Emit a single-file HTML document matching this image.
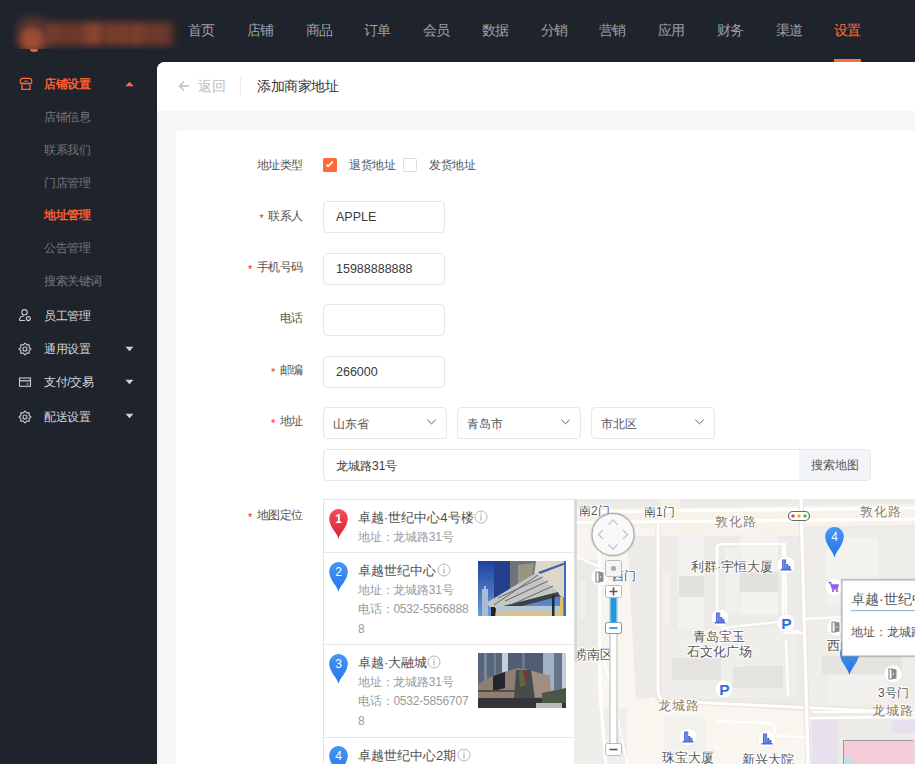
<!DOCTYPE html>
<html><head><meta charset="utf-8">
<style>
*{margin:0;padding:0;box-sizing:border-box}
html,body{width:915px;height:764px;overflow:hidden;background:#1f232c;font-family:"Liberation Sans",sans-serif}
.abs{position:absolute}
#hdr{position:absolute;left:0;top:0;width:915px;height:62px;background:#1f232c}
.nav{position:absolute;top:21px;font-size:14px;line-height:18px;color:#9ea1a8;white-space:nowrap;letter-spacing:-1px}
.nav.on{color:#ff6a3a;font-weight:500}
#navbar{position:absolute;left:834px;top:59px;width:27px;height:3px;background:#ff6c3b}
#side{position:absolute;left:0;top:62px;width:157px;height:702px;background:#1f232c}
.si{position:absolute;left:44px;font-size:12px;line-height:16px;color:#d4d6da;white-space:nowrap;font-weight:500;letter-spacing:-0.4px}
.si.sub{color:#73767d;font-weight:400}
.si.on{color:#fa5f32;font-weight:600}
#main{position:absolute;left:157px;top:62px;width:758px;height:702px;background:#f6f6f6;border-top-left-radius:8px;overflow:hidden}
#topbar{position:absolute;left:0;top:0;width:758px;height:49px;background:#fff}
#card{position:absolute;left:19px;top:68px;width:760px;height:700px;background:#fff;border-radius:4px}
.lbl{position:absolute;font-size:12px;letter-spacing:-0.45px;line-height:16px;color:#555;white-space:nowrap;text-align:right}
.req{color:#f5222d;font-size:11px;margin-right:5px;position:relative;top:2px}
.inp{position:absolute;border:1px solid #e8e8e8;border-radius:4px;background:#fff;font-size:12.5px;color:#3a3a3a;line-height:16px}
.t13{position:absolute;font-size:13px;line-height:18px;color:#505050;white-space:nowrap}
.t12{position:absolute;font-size:12px;line-height:16px;color:#9a9a9a;white-space:nowrap;letter-spacing:-0.2px}
</style></head><body>
<div id="hdr">
  <div class="abs" style="left:0;top:8px;width:190px;height:41px;overflow:hidden">
<div class="abs" style="left:14px;top:0;width:176px;height:50px;filter:blur(3.5px)">
<div class="abs" style="left:32px;top:14px;width:128px;height:24px;background:#56302a"></div>
<div class="abs" style="left:36px;top:14px;width:3px;height:23px;background:#8d4631"></div><div class="abs" style="left:42px;top:14px;width:2px;height:23px;background:#a14c30"></div><div class="abs" style="left:48px;top:14px;width:2px;height:23px;background:#96482f"></div><div class="abs" style="left:54px;top:14px;width:2px;height:23px;background:#8d4631"></div><div class="abs" style="left:58px;top:14px;width:2px;height:23px;background:#7a3f2e"></div><div class="abs" style="left:63px;top:14px;width:2px;height:23px;background:#8d4631"></div><div class="abs" style="left:67px;top:14px;width:5px;height:23px;background:#7a3f2e"></div><div class="abs" style="left:74px;top:14px;width:5px;height:23px;background:#a14c30"></div><div class="abs" style="left:81px;top:14px;width:5px;height:23px;background:#a14c30"></div><div class="abs" style="left:90px;top:14px;width:5px;height:23px;background:#7a3f2e"></div><div class="abs" style="left:97px;top:14px;width:3px;height:23px;background:#a14c30"></div><div class="abs" style="left:104px;top:14px;width:3px;height:23px;background:#96482f"></div><div class="abs" style="left:110px;top:14px;width:3px;height:23px;background:#a14c30"></div><div class="abs" style="left:117px;top:14px;width:3px;height:23px;background:#8d4631"></div><div class="abs" style="left:122px;top:14px;width:5px;height:23px;background:#8d4631"></div><div class="abs" style="left:130px;top:14px;width:2px;height:23px;background:#a14c30"></div><div class="abs" style="left:136px;top:14px;width:2px;height:23px;background:#8d4631"></div><div class="abs" style="left:141px;top:14px;width:5px;height:23px;background:#7a3f2e"></div><div class="abs" style="left:149px;top:14px;width:4px;height:23px;background:#7a3f2e"></div>
<div class="abs" style="left:6px;top:19px;width:24px;height:24px;border-radius:50%;background:#c95d3a"></div>
<div class="abs" style="left:2px;top:8px;width:34px;height:38px;border-radius:40%;background:#7a3f2f;opacity:.55"></div>
</div></div>
<div class="abs" style="left:30px;top:49px;width:8px;height:3px;border-radius:0 0 4px 4px;background:#e0622f"></div>
  <div class="nav" style="left:188px">首页</div>
  <div class="nav" style="left:247px">店铺</div>
  <div class="nav" style="left:306px">商品</div>
  <div class="nav" style="left:364px">订单</div>
  <div class="nav" style="left:423px">会员</div>
  <div class="nav" style="left:482px">数据</div>
  <div class="nav" style="left:541px">分销</div>
  <div class="nav" style="left:599px">营销</div>
  <div class="nav" style="left:658px">应用</div>
  <div class="nav" style="left:717px">财务</div>
  <div class="nav" style="left:776px">渠道</div>
  <div class="nav on" style="left:834px">设置</div>
  <div id="navbar"></div>
</div>
<div id="side">
  <div class="si on" style="top:14px">店铺设置</div>
  <div class="si sub" style="top:47px">店铺信息</div>
  <div class="si sub" style="top:80px">联系我们</div>
  <div class="si sub" style="top:113px">门店管理</div>
  <div class="si on" style="top:145px">地址管理</div>
  <div class="si sub" style="top:178px">公告管理</div>
  <div class="si sub" style="top:211px">搜索关键词</div>
  <div class="si" style="top:246px">员工管理</div>
  <div class="si" style="top:279px">通用设置</div>
  <div class="si" style="top:312px">支付/交易</div>
  <div class="si" style="top:347px">配送设置</div>
</div>

<svg class="abs" style="left:19px;top:77px" width="14" height="14" viewBox="0 0 14 14"><path d="M2 6.3C1.2 5.8 1.1 4.8 1.3 3.6C1.6 2 2.3 1.3 3.6 1.3H10.4C11.7 1.3 12.4 2 12.7 3.6C12.9 4.8 12.8 5.8 12 6.3C11.2 6.9 10.2 6.6 9.5 6C8.9 6.7 8 7 7 6.3C6 7 5.1 6.7 4.5 6C3.8 6.6 2.8 6.9 2 6.3Z" fill="none" stroke="#ff6a3a" stroke-width="1.3" stroke-linejoin="round"/><path d="M5.3 4.2H8.7" stroke="#ff6a3a" stroke-width="1.1"/><path d="M3 7.3V12.4H11V7.3" fill="none" stroke="#ff6a3a" stroke-width="1.3"/></svg>
<svg class="abs" style="left:125px;top:81px" width="9" height="6" viewBox="0 0 9 6"><path d="M0.3 5.3L4.5 0.8L8.7 5.3Z" fill="#ff6a3a"/></svg>
<svg class="abs" style="left:18px;top:308px" width="14" height="14" viewBox="0 0 14 14"><circle cx="6.5" cy="4.3" r="2.7" fill="none" stroke="#c9cbd0" stroke-width="1.1"/><path d="M1.5 12.5C1.5 9.5 3.5 8 6 8" fill="none" stroke="#c9cbd0" stroke-width="1.1"/><path d="M1.5 12.5H7" stroke="#c9cbd0" stroke-width="1.1"/><circle cx="10.3" cy="10.6" r="2" fill="none" stroke="#c9cbd0" stroke-width="1.1"/></svg>
<svg class="abs" style="left:18px;top:342px" width="14" height="14" viewBox="0 0 14 14"><path d="M7 1L8.7 2.9L11.2 2.8L11.1 5.3L13 7L11.1 8.7L11.2 11.2L8.7 11.1L7 13L5.3 11.1L2.8 11.2L2.9 8.7L1 7L2.9 5.3L2.8 2.8L5.3 2.9Z" fill="none" stroke="#c9cbd0" stroke-width="1.1" stroke-linejoin="round"/><circle cx="7" cy="7" r="2" fill="none" stroke="#c9cbd0" stroke-width="1.1"/></svg>
<svg class="abs" style="left:18px;top:375px" width="14" height="14" viewBox="0 0 14 14"><rect x="1.5" y="3" width="11" height="8.3" fill="none" stroke="#c9cbd0" stroke-width="1.1"/><path d="M1.5 5.8H12.5" stroke="#c9cbd0" stroke-width="1.3"/><path d="M8.5 9H10.5" stroke="#c9cbd0" stroke-width="1.1"/></svg>
<svg class="abs" style="left:18px;top:410px" width="14" height="14" viewBox="0 0 14 14"><path d="M7 1L8.7 2.9L11.2 2.8L11.1 5.3L13 7L11.1 8.7L11.2 11.2L8.7 11.1L7 13L5.3 11.1L2.8 11.2L2.9 8.7L1 7L2.9 5.3L2.8 2.8L5.3 2.9Z" fill="none" stroke="#c9cbd0" stroke-width="1.1" stroke-linejoin="round"/><circle cx="7" cy="7" r="2" fill="none" stroke="#c9cbd0" stroke-width="1.1"/></svg>
<svg class="abs" style="left:125px;top:346px" width="9" height="6" viewBox="0 0 9 6"><path d="M0.5 0.8L4.5 5.2L8.5 0.8Z" fill="#d0d0d0"/></svg>
<svg class="abs" style="left:125px;top:379px" width="9" height="6" viewBox="0 0 9 6"><path d="M0.5 0.8L4.5 5.2L8.5 0.8Z" fill="#d0d0d0"/></svg>
<svg class="abs" style="left:125px;top:413px" width="9" height="6" viewBox="0 0 9 6"><path d="M0.5 0.8L4.5 5.2L8.5 0.8Z" fill="#d0d0d0"/></svg>
<div id="main">
  <div id="topbar"></div>
  <div id="card"></div>
</div>

<div id="form">
  <!-- topbar content -->
  <svg class="abs" style="left:178px;top:80px" width="12" height="12" viewBox="0 0 12 12"><path d="M11 6H1.5M6 1.5L1.5 6L6 10.5" fill="none" stroke="#bfbfbf" stroke-width="1.3"/></svg>
  <div class="abs" style="left:198px;top:77px;font-size:14px;line-height:18px;color:#bdbdbd">返回</div>
  <div class="abs" style="left:240px;top:77px;width:1px;height:19px;background:#ebebeb"></div>
  <div class="abs" style="left:257px;top:77px;font-size:14px;line-height:18px;color:#333;letter-spacing:-0.5px">添加商家地址</div>

  <div class="lbl" style="left:203px;width:100px;top:157px">地址类型</div>
  <div class="abs" style="left:323px;top:158px;width:14px;height:14px;background:#ff6a3a;border-radius:1.5px"></div>
  <svg class="abs" style="left:323px;top:158px" width="14" height="14" viewBox="0 0 14 14"><path d="M3.4 6.7L5.1 8.4L9.7 3.6" fill="none" stroke="#fff" stroke-width="1.7"/></svg>
  <div class="abs" style="left:349px;top:157px;font-size:12px;line-height:16px;color:#555;letter-spacing:-0.4px">退货地址</div>
  <div class="abs" style="left:403px;top:158px;width:14px;height:14px;border:1px solid #dcdcdc;border-radius:2px;background:#fff"></div>
  <div class="abs" style="left:429px;top:157px;font-size:12px;line-height:16px;color:#555;letter-spacing:-0.4px">发货地址</div>

  <div class="lbl" style="left:203px;width:100px;top:208px"><span class="req">*</span>联系人</div>
  <div class="inp" style="left:323px;top:201px;width:122px;height:32px;padding:6.5px 12px">APPLE</div>
  <div class="lbl" style="left:203px;width:100px;top:259px"><span class="req">*</span>手机号码</div>
  <div class="inp" style="left:323px;top:253px;width:122px;height:32px;padding:6.5px 12px">15988888888</div>
  <div class="lbl" style="left:203px;width:100px;top:310px">电话</div>
  <div class="inp" style="left:323px;top:304px;width:122px;height:32px"></div>
  <div class="lbl" style="left:203px;width:100px;top:362px"><span class="req">*</span>邮编</div>
  <div class="inp" style="left:323px;top:356px;width:122px;height:32px;padding:6.5px 12px">266000</div>
  <div class="lbl" style="left:203px;width:100px;top:413px"><span class="req">*</span>地址</div>
  <div class="inp" style="left:323px;top:407px;width:124px;height:32px;padding:7.5px 9px;color:#555;font-size:12px">山东省</div>
  <div class="inp" style="left:457px;top:407px;width:124px;height:32px;padding:7.5px 9px;color:#555;font-size:12px">青岛市</div>
  <div class="inp" style="left:591px;top:407px;width:124px;height:32px;padding:7.5px 9px;color:#555;font-size:12px">市北区</div>
  <svg class="abs" style="left:426px;top:418px" width="11" height="8" viewBox="0 0 11 8"><path d="M1.3 1.7L5.5 5.8L9.7 1.7" fill="none" stroke="#5a5a5a" stroke-width="1"/></svg>
  <svg class="abs" style="left:560px;top:418px" width="11" height="8" viewBox="0 0 11 8"><path d="M1.3 1.7L5.5 5.8L9.7 1.7" fill="none" stroke="#5a5a5a" stroke-width="1"/></svg>
  <svg class="abs" style="left:694px;top:418px" width="11" height="8" viewBox="0 0 11 8"><path d="M1.3 1.7L5.5 5.8L9.7 1.7" fill="none" stroke="#5a5a5a" stroke-width="1"/></svg>
  <div class="inp" style="left:323px;top:449px;width:548px;height:32px;padding:7.5px 12px;font-size:12px">龙城路31号</div>
  <div class="abs" style="left:799px;top:450px;width:71px;height:30px;background:#f3f4f7;font-size:12px;line-height:30px;text-align:center;color:#555;border-radius:0 3px 3px 0">搜索地图</div>

  <div class="lbl" style="left:203px;width:100px;top:507px"><span class="req">*</span>地图定位</div>
</div>

<div id="list" class="abs" style="left:323px;top:499px;width:251px;height:265px;background:#fff;border-left:1px solid #e4e4e4;border-top:1px solid #e4e4e4;overflow:hidden">
</div>
<div class="abs" style="left:574px;top:499px;width:4px;height:265px;background:#ececec"></div>
<div class="abs" style="left:574px;top:499px;width:4px;height:163px;background:#dadada"></div>
<div class="abs" style="left:324px;top:552px;width:250px;height:1px;background:#e8e8e8"></div>
<div class="abs" style="left:324px;top:644px;width:250px;height:1px;background:#e8e8e8"></div>
<div class="abs" style="left:324px;top:737px;width:250px;height:1px;background:#e8e8e8"></div>
<svg class="abs" style="left:329px;top:509px" width="19" height="30" viewBox="0 0 19 30"><defs><linearGradient id="g1r" x1="0" y1="0" x2="0" y2="1"><stop offset="0" stop-color="#f24f5e"/><stop offset="1" stop-color="#dc1d36"/></linearGradient></defs><path d="M9.5 30C8.6 24 1.2 19.5 0.28 10.5A9.3 9.3 0 1 1 18.72 10.5C17.8 19.5 10.4 24 9.5 30Z" fill="url(#g1r)"/><text x="9.5" y="14" font-size="12" font-weight="bold" text-anchor="middle" fill="#fff" font-family="Liberation Sans">1</text></svg>
<svg class="abs" style="left:329px;top:562px" width="19" height="30" viewBox="0 0 19 30"><defs><linearGradient id="g2b" x1="0" y1="0" x2="0" y2="1"><stop offset="0" stop-color="#4596f7"/><stop offset="1" stop-color="#2476e6"/></linearGradient></defs><path d="M9.5 30C8.6 24 1.2 19.5 0.28 10.5A9.3 9.3 0 1 1 18.72 10.5C17.8 19.5 10.4 24 9.5 30Z" fill="url(#g2b)"/><text x="9.5" y="14.3" font-size="12" text-anchor="middle" fill="#fff" font-family="Liberation Sans">2</text></svg>
<svg class="abs" style="left:329px;top:654px" width="19" height="30" viewBox="0 0 19 30"><defs><linearGradient id="g3b" x1="0" y1="0" x2="0" y2="1"><stop offset="0" stop-color="#4596f7"/><stop offset="1" stop-color="#2476e6"/></linearGradient></defs><path d="M9.5 30C8.6 24 1.2 19.5 0.28 10.5A9.3 9.3 0 1 1 18.72 10.5C17.8 19.5 10.4 24 9.5 30Z" fill="url(#g3b)"/><text x="9.5" y="14.3" font-size="12" text-anchor="middle" fill="#fff" font-family="Liberation Sans">3</text></svg>
<svg class="abs" style="left:329px;top:746px" width="19" height="30" viewBox="0 0 19 30"><defs><linearGradient id="g4b" x1="0" y1="0" x2="0" y2="1"><stop offset="0" stop-color="#4596f7"/><stop offset="1" stop-color="#2476e6"/></linearGradient></defs><path d="M9.5 30C8.6 24 1.2 19.5 0.28 10.5A9.3 9.3 0 1 1 18.72 10.5C17.8 19.5 10.4 24 9.5 30Z" fill="url(#g4b)"/><text x="9.5" y="14.3" font-size="12" text-anchor="middle" fill="#fff" font-family="Liberation Sans">4</text></svg>
<div class="t13" style="left:358px;top:509px">卓越·世纪中心4号楼</div><svg class="abs" style="left:474px;top:510px" width="14" height="14" viewBox="0 0 14 14"><circle cx="7" cy="7" r="6" fill="none" stroke="#b5b5b5" stroke-width="1"/><rect x="6.4" y="3.2" width="1.2" height="1.3" fill="#b5b5b5"/><rect x="6.4" y="5.5" width="1.2" height="5.3" fill="#b5b5b5"/></svg>
<div class="t12" style="left:358px;top:529px">地址：龙城路31号</div>
<div class="t13" style="left:358px;top:562px">卓越世纪中心</div><svg class="abs" style="left:437px;top:563px" width="14" height="14" viewBox="0 0 14 14"><circle cx="7" cy="7" r="6" fill="none" stroke="#b5b5b5" stroke-width="1"/><rect x="6.4" y="3.2" width="1.2" height="1.3" fill="#b5b5b5"/><rect x="6.4" y="5.5" width="1.2" height="5.3" fill="#b5b5b5"/></svg>
<div class="t12" style="left:358px;top:582px">地址：龙城路31号</div>
<div class="t12" style="left:358px;top:601px">电话：0532-5566888</div>
<div class="t12" style="left:358px;top:621px">8</div>
<div class="t13" style="left:358px;top:654px">卓越·大融城</div><svg class="abs" style="left:427px;top:655px" width="14" height="14" viewBox="0 0 14 14"><circle cx="7" cy="7" r="6" fill="none" stroke="#b5b5b5" stroke-width="1"/><rect x="6.4" y="3.2" width="1.2" height="1.3" fill="#b5b5b5"/><rect x="6.4" y="5.5" width="1.2" height="5.3" fill="#b5b5b5"/></svg>
<div class="t12" style="left:358px;top:674px">地址：龙城路31号</div>
<div class="t12" style="left:358px;top:693px">电话：0532-5856707</div>
<div class="t12" style="left:358px;top:713px">8</div>
<div class="t13" style="left:358px;top:747px">卓越世纪中心2期</div><svg class="abs" style="left:457px;top:748px" width="14" height="14" viewBox="0 0 14 14"><circle cx="7" cy="7" r="6" fill="none" stroke="#b5b5b5" stroke-width="1"/><rect x="6.4" y="3.2" width="1.2" height="1.3" fill="#b5b5b5"/><rect x="6.4" y="5.5" width="1.2" height="5.3" fill="#b5b5b5"/></svg>
<div id="img2" class="abs" style="left:478px;top:561px;width:88px;height:55px;overflow:hidden">
 <svg width="88" height="55" viewBox="0 0 88 55" style="filter:blur(0.6px)"><defs><linearGradient id="sky" x1="0" y1="0" x2="0" y2="1"><stop offset="0" stop-color="#1c43a0"/><stop offset="1" stop-color="#6d9ad8"/></linearGradient></defs>
 <rect width="88" height="55" fill="url(#sky)"/>
 <rect x="4" y="28" width="6" height="27" fill="#a9bcd6"/><rect x="6" y="25" width="2" height="4" fill="#a9bcd6"/>
 <polygon points="16,0 60,0 55,20 16,40" fill="#263f8c"/>
 <polygon points="32,0 60,0 56,22 32,32" fill="#6f737a"/><polygon points="40,4 56,2 54,18 40,24" fill="#9a9484"/>
 <polygon points="58,0 88,0 88,38 74,30 56,14" fill="#ddd7c8"/>
 <polygon points="60,11 88,1 88,3 62,13" fill="#3a62b0"/>
 <rect x="86" y="0" width="2" height="55" fill="#3a6cc0"/>
 <polygon points="8,42 58,12 80,31 14,48" fill="#c3c6c2"/>
 <g stroke="#5a5f62" stroke-width="0.9"><path d="M20 37L65 16"/><path d="M27 40L70 20"/><path d="M35 43L75 25"/><path d="M16 44L60 14"/></g>
 <polygon points="14,48 80,31 82,35 18,52" fill="#3e4146"/>
 <rect x="18" y="45" width="64" height="10" fill="#b8c8d2"/>
 <rect x="20" y="50" width="62" height="5" fill="#d8c48a"/>
 <rect x="74" y="34" width="2.5" height="21" fill="#1e2a3c"/><rect x="13" y="46" width="4" height="9" fill="#222"/>
 <rect x="82" y="36" width="3" height="19" fill="#e0c060"/>
 </svg></div>
<div id="img3" class="abs" style="left:478px;top:653px;width:88px;height:55px;overflow:hidden">
 <svg width="88" height="55" viewBox="0 0 88 55" style="filter:blur(0.6px)">
 <rect width="88" height="55" fill="#5d6b7d"/>
 <rect x="0" y="0" width="25" height="32" fill="#566577"/>
 <rect x="6" y="0" width="3" height="30" fill="#7a8898"/><rect x="16" y="0" width="2" height="26" fill="#718092"/>
 <rect x="24" y="0" width="6" height="22" fill="#c3cfdc"/>
 <rect x="30" y="0" width="35" height="22" fill="#505e72"/>
 <rect x="44" y="0" width="3" height="18" fill="#6c7a8c"/>
 <rect x="65" y="0" width="11" height="45" fill="#a3b2c2"/>
 <rect x="76" y="0" width="8" height="42" fill="#66768a"/>
 <rect x="84" y="0" width="4" height="42" fill="#c5cfda"/>
 <polygon points="0,31 16,22 40,15 52,17 72,23 72,46 0,46" fill="#8f7f73"/>
 <polygon points="52,18 72,23 73,44 56,44" fill="#a08e80"/>
 <polygon points="15,23 27,19 27,35 15,38" fill="#23262e"/>
 <polygon points="38,17 53,17 57,46 36,46" fill="#4a4a4c"/>
 <polygon points="41,18 45,17 48,32 42,34" fill="#5e6848"/>
 <polygon points="46,17 50,18 49,30 47,30" fill="#7a3a34"/>
 <rect x="0" y="37" width="38" height="2" fill="#5a4c44"/>
 <rect x="0" y="45" width="88" height="10" fill="#34353a"/>
 <rect x="58" y="50" width="26" height="5" fill="#b8b8b8"/>
 <polygon points="64,40 88,35 88,50 64,50" fill="#4a5646"/>
 </svg></div>
<!--MAP--><svg class="abs" style="left:577px;top:499px" width="338" height="265" viewBox="577 499 338 265" font-family="Liberation Sans, sans-serif">
<rect x="577" y="499" width="338" height="265" fill="#ecebe7"/>
<polygon points="577,526 640,526 640,764 577,764" fill="#f8f5ee"/>
<rect x="577" y="560" width="21" height="90" fill="#ebeae6"/>
<rect x="580" y="580" width="5" height="40" fill="#f0efeb"/>
<rect x="577" y="650" width="21" height="59" fill="#efeeea"/>
<polygon points="640,526 800,526 800,536 640,536" fill="#f7f3ea"/>
<polygon points="603,526 655,526 655,700 640,764 603,764" fill="#f9f6ef"/>
<polygon points="627,536 656,536 656,697 636,700" fill="#ecebe7"/>
<polygon points="640,700 810,712 810,764 640,764" fill="#f9f6ef"/>
<rect x="678" y="535" width="26" height="93" fill="#f3f2ee"/>
<rect x="662" y="572" width="8" height="55" fill="#f1f0ec"/>
<rect x="740" y="535" width="38" height="80" fill="#f3f2ee"/>
<rect x="725" y="548" width="14" height="67" fill="#f1f0ec"/>
<rect x="662" y="628" width="135" height="70" fill="#efeeea"/>
<rect x="805" y="530" width="110" height="180" fill="#eeede9"/>
<rect x="826" y="538" width="52" height="67" fill="#f3f2ee"/>
<rect x="828" y="675" width="60" height="30" fill="#f1f0ec"/>
<rect x="679" y="576" width="25" height="21" fill="#e3e2de"/>
<rect x="740" y="572" width="38" height="20" fill="#e3e2de"/>
<rect x="745" y="666" width="38" height="22" fill="#e3e2de"/>
<rect x="672" y="658" width="49" height="22" fill="#e4e3df"/>
<rect x="733" y="667" width="50" height="21" fill="#e4e3df"/>
<rect x="822" y="656" width="80" height="18" fill="#e4e3df"/>
<rect x="577" y="709" width="50" height="55" fill="#efeeea"/>
<rect x="664" y="716" width="42" height="48" fill="#f3f1eb"/>
<rect x="812" y="720" width="26" height="44" fill="#e7e0ee"/>
<rect x="892" y="720" width="23" height="13" fill="#e7e0ee"/>
<rect x="843.5" y="740.5" width="70" height="30" fill="#f5cdd9" stroke="#9a9a9a" stroke-width="1"/>
<rect x="844" y="758" width="8" height="6" fill="#bfe0ea"/>
<rect x="913" y="740" width="2" height="24" fill="#ddd"/>
<rect x="660" y="499" width="20" height="12" fill="#f5f2ea"/>
<polygon points="577,509 915,504 915,525 577,530" fill="#f7f3ea"/>
<path d="M577 512 L915 508" stroke="#fff" stroke-width="3.2"/>
<path d="M577 522.5 L915 519" stroke="#fff" stroke-width="3.2"/>
<path d="M599.5 525 L599.5 660 Q600 700 606 764" stroke="#fff" stroke-width="3" fill="none"/>
<path d="M658 524 L658 690 Q658 700 668 701 L915 713" stroke="#e9e3d8" stroke-width="5" fill="none"/>
<path d="M658 524 L658 690 Q658 700 668 701 L915 713" stroke="#fff" stroke-width="3" fill="none"/>
<path d="M801 499 L808 764" stroke="#e9e3d8" stroke-width="5.5"/>
<path d="M801 499 L808 764" stroke="#fff" stroke-width="3.5"/>
<path d="M915 711.5 L812 712" stroke="#fff" stroke-width="2"/>
<path d="M915 717 L810 718" stroke="#fff" stroke-width="2.5"/>
<path d="M717 622 L717 548 Q717 544 721 544 L783 544 L783 618" stroke="#fff" stroke-width="2.2" fill="none"/>
<path d="M745 544 L785 544 L786 618" stroke="#fff" stroke-width="2.2" fill="none"/>
<path d="M786 640 L788 696" stroke="#fff" stroke-width="2.2" fill="none"/>
<path d="M805 619 L842 617" stroke="#fff" stroke-width="2" fill="none"/>
<path d="M783 633 L806 633" stroke="#fff" stroke-width="2" fill="none"/>
<path d="M577 557 L600 567" stroke="#fff" stroke-width="2"/>
<path d="M717 721 L770 723 Q775 724 775 730 L775 736 L805 737" stroke="#fff" stroke-width="2.2" fill="none"/>
<path d="M713 747 L760 750" stroke="#fbfaf6" stroke-width="1.5" fill="none"/>
<path d="M721 628 L779 622" stroke="#fff" stroke-width="2"/>
<path d="M790 631 L801 631" stroke="#fff" stroke-width="1.6"/>
<path d="M604 660 Q615 700 627 764" stroke="#fff" stroke-width="1.6" fill="none"/>
<rect x="788.5" y="511.5" width="21" height="9" rx="4.5" fill="#fff" stroke="#666" stroke-width="1.2"/><circle cx="793" cy="516" r="1.8" fill="#e8455a"/><circle cx="799" cy="516" r="1.8" fill="#f5b400"/><circle cx="805" cy="516" r="1.8" fill="#3cc55a"/>
<text x="579" y="515" font-size="12" fill="#555" letter-spacing="0" stroke="#fff" stroke-width="2.2" paint-order="stroke" stroke-linejoin="round">南2门</text>
<text x="644" y="516" font-size="12" fill="#555" letter-spacing="0" stroke="#fff" stroke-width="2.2" paint-order="stroke" stroke-linejoin="round">南1门</text>
<text x="715" y="526" font-size="13" fill="#8b7c6c" letter-spacing="1" stroke="#fff" stroke-width="2.2" paint-order="stroke" stroke-linejoin="round">敦化路</text>
<text x="860" y="516" font-size="13" fill="#8b7c6c" letter-spacing="1" stroke="#fff" stroke-width="2.2" paint-order="stroke" stroke-linejoin="round">敦化路</text>
<text x="691" y="571" font-size="13" fill="#555" letter-spacing="0" stroke="#fff" stroke-width="2.2" paint-order="stroke" stroke-linejoin="round">利群·宇恒大厦</text>
<text x="693" y="641" font-size="13" fill="#555" letter-spacing="0" stroke="#fff" stroke-width="2.2" paint-order="stroke" stroke-linejoin="round">青岛宝玉</text>
<text x="687" y="656" font-size="13" fill="#555" letter-spacing="0" stroke="#fff" stroke-width="2.2" paint-order="stroke" stroke-linejoin="round">石文化广场</text>
<text x="574" y="659" font-size="13" fill="#555" letter-spacing="0" stroke="#fff" stroke-width="2.2" paint-order="stroke" stroke-linejoin="round">崂南区</text>
<text x="658" y="710" font-size="13" fill="#8b7c6c" letter-spacing="1" stroke="#fff" stroke-width="2.2" paint-order="stroke" stroke-linejoin="round">龙城路</text>
<text x="872" y="715" font-size="13" fill="#8b7c6c" letter-spacing="1" stroke="#fff" stroke-width="2.2" paint-order="stroke" stroke-linejoin="round">龙城路</text>
<text x="662" y="762" font-size="13" fill="#555" letter-spacing="0" stroke="#fff" stroke-width="2.2" paint-order="stroke" stroke-linejoin="round">珠宝大厦</text>
<text x="742" y="764" font-size="13" fill="#555" letter-spacing="0" stroke="#fff" stroke-width="2.2" paint-order="stroke" stroke-linejoin="round">新兴大院</text>
<text x="878" y="697" font-size="12" fill="#555" letter-spacing="0" stroke="#fff" stroke-width="2.2" paint-order="stroke" stroke-linejoin="round">3号门</text>
<text x="827" y="650" font-size="13" fill="#555" letter-spacing="0" stroke="#fff" stroke-width="2.2" paint-order="stroke" stroke-linejoin="round">西门</text>
<text x="612" y="580" font-size="12" fill="#555" letter-spacing="0" stroke="#fff" stroke-width="2.2" paint-order="stroke" stroke-linejoin="round">西门</text>
<circle cx="786" cy="565" r="9" fill="#fff" stroke="#e6e4de" stroke-width="0.6"/><g fill="#4d6ad6"><rect x="782" y="559.5" width="4.2" height="9.5"/><rect x="786.2" y="564" width="2.2" height="5"/><rect x="788.4" y="566" width="2" height="3"/><rect x="780.5" y="569" width="11" height="1.5"/></g><g fill="#fff" opacity="0.5"><rect x="783.4" y="560.5" width="0.6" height="8"/><rect x="784.8" y="560.5" width="0.6" height="8"/></g>
<circle cx="720" cy="618" r="9" fill="#fff" stroke="#e6e4de" stroke-width="0.6"/><g fill="#4d6ad6"><rect x="716" y="612.5" width="4.2" height="9.5"/><rect x="720.2" y="617" width="2.2" height="5"/><rect x="722.4" y="619" width="2" height="3"/><rect x="714.5" y="622" width="11" height="1.5"/></g><g fill="#fff" opacity="0.5"><rect x="717.4" y="613.5" width="0.6" height="8"/><rect x="718.8" y="613.5" width="0.6" height="8"/></g>
<circle cx="688" cy="737" r="9" fill="#fff" stroke="#e6e4de" stroke-width="0.6"/><g fill="#4d6ad6"><rect x="684" y="731.5" width="4.2" height="9.5"/><rect x="688.2" y="736" width="2.2" height="5"/><rect x="690.4" y="738" width="2" height="3"/><rect x="682.5" y="741" width="11" height="1.5"/></g><g fill="#fff" opacity="0.5"><rect x="685.4" y="732.5" width="0.6" height="8"/><rect x="686.8" y="732.5" width="0.6" height="8"/></g>
<circle cx="767" cy="739" r="9" fill="#fff" stroke="#e6e4de" stroke-width="0.6"/><g fill="#4d6ad6"><rect x="763" y="733.5" width="4.2" height="9.5"/><rect x="767.2" y="738" width="2.2" height="5"/><rect x="769.4" y="740" width="2" height="3"/><rect x="761.5" y="743" width="11" height="1.5"/></g><g fill="#fff" opacity="0.5"><rect x="764.4" y="734.5" width="0.6" height="8"/><rect x="765.8" y="734.5" width="0.6" height="8"/></g>
<circle cx="786" cy="623" r="9" fill="#fff" stroke="#e6e4de" stroke-width="0.6"/><text x="786.5" y="628.5" font-size="15.5" font-weight="bold" text-anchor="middle" fill="#2f6fd6" font-family="Liberation Sans">P</text>
<circle cx="724" cy="689" r="9" fill="#fff" stroke="#e6e4de" stroke-width="0.6"/><text x="724.5" y="694.5" font-size="15.5" font-weight="bold" text-anchor="middle" fill="#2f6fd6" font-family="Liberation Sans">P</text>
<circle cx="600" cy="577" r="9" fill="#fff" stroke="#e6e4de" stroke-width="0.6"/><path d="M599 572H596V582H599" fill="none" stroke="#8a8a8a" stroke-width="1.2"/><path d="M598.5 571.5L603.5 572.5V581.5L598.5 582.5Z" fill="#8a8a8a"/><circle cx="600.5" cy="577" r="0.7" fill="#fff"/>
<circle cx="836" cy="627" r="9" fill="#fff" stroke="#e6e4de" stroke-width="0.6"/><path d="M835 622H832V632H835" fill="none" stroke="#8a8a8a" stroke-width="1.2"/><path d="M834.5 621.5L839.5 622.5V631.5L834.5 632.5Z" fill="#8a8a8a"/><circle cx="836.5" cy="627" r="0.7" fill="#fff"/>
<circle cx="893" cy="674" r="9" fill="#fff" stroke="#e6e4de" stroke-width="0.6"/><path d="M892 669H889V679H892" fill="none" stroke="#8a8a8a" stroke-width="1.2"/><path d="M891.5 668.5L896.5 669.5V678.5L891.5 679.5Z" fill="#8a8a8a"/><circle cx="893.5" cy="674" r="0.7" fill="#fff"/>
<circle cx="834" cy="587" r="9" fill="#fff" stroke="#e6e4de" stroke-width="0.6"/><path d="M828.5 582.5H830.5L832.5 589H838" fill="none" stroke="#8756d6" stroke-width="1.3"/><path d="M831 584.2H839L838 588H832Z" fill="#8d5ce0"/><circle cx="833" cy="591" r="1.1" fill="#8756d6"/><circle cx="837" cy="591" r="1.1" fill="#8756d6"/>
<defs><linearGradient id="mb" x1="0" y1="0" x2="0" y2="1"><stop offset="0" stop-color="#4596f7"/><stop offset="1" stop-color="#2476e6"/></linearGradient></defs>
<g transform="translate(825,527)"><path d="M9.5 31C8.6 24.5 1.2 19.5 0.28 10.5A9.3 9.3 0 1 1 18.72 10.5C17.8 19.5 10.4 24.5 9.5 31Z" fill="url(#mb)"/><text x="9.5" y="14.3" font-size="12" text-anchor="middle" fill="#fff">4</text></g>
<g transform="translate(840,644)"><path d="M9.5 31C8 24 0 18 0 9.5A9.5 9.5 0 1 1 19 9.5C19 18 11 24 9.5 31Z" fill="url(#mb)"/></g>
<rect x="842" y="580" width="80" height="76" fill="none" stroke="#000" stroke-opacity="0.1" stroke-width="3"/><rect x="842" y="580" width="80" height="76" fill="#fff" stroke="#aaa" stroke-width="1"/>
<text x="851" y="604" font-size="14" fill="#555">卓越·世纪中心</text>
<rect x="851" y="610" width="70" height="1.2" fill="#9fb7dd"/>
<text x="851" y="636" font-size="12" fill="#555">地址：龙城路31号</text>
<circle cx="613" cy="534.5" r="21.5" fill="none" stroke="#000" stroke-opacity="0.08" stroke-width="2.5"/>
<circle cx="613" cy="534.5" r="21" fill="#f9f9f9" stroke="#b0b0b0" stroke-width="1.3"/>
<path d="M608.5 524.5l4.5-4.5 4.5 4.5M608.5 544.5l4.5 4.5 4.5-4.5M603 530l-4.5 4.5 4.5 4.5M623 530l4.5 4.5-4.5 4.5" fill="none" stroke="#c6c6c6" stroke-width="1.3"/>
<rect x="605.5" y="560.5" width="16" height="16" rx="2" fill="#f4f4f4" stroke="#bbb" stroke-width="1"/><circle cx="613.5" cy="568.5" r="2.5" fill="#a8a8a8"/>
<rect x="610" y="597" width="7" height="148" fill="#fff" stroke="#b9b9b9" stroke-width="1"/>
<rect x="610.5" y="597" width="6" height="28" fill="#1d9be0"/>
<rect x="605.5" y="585.5" width="16" height="12" rx="2" fill="#fff" stroke="#bbb" stroke-width="1"/><path d="M609.5 591.5h8M613.5 587.5v8" stroke="#555" stroke-width="1.6"/>
<rect x="605.5" y="622.5" width="16" height="11" rx="2" fill="#fff" stroke="#5aa0c8" stroke-width="1"/><path d="M609.5 628h8" stroke="#1d9be0" stroke-width="1.8"/>
<rect x="605.5" y="743.5" width="16" height="12" rx="2" fill="#fff" stroke="#bbb" stroke-width="1"/><path d="M609.5 749.5h8" stroke="#555" stroke-width="1.6"/>
</svg><!--/MAP-->
</body></html>
